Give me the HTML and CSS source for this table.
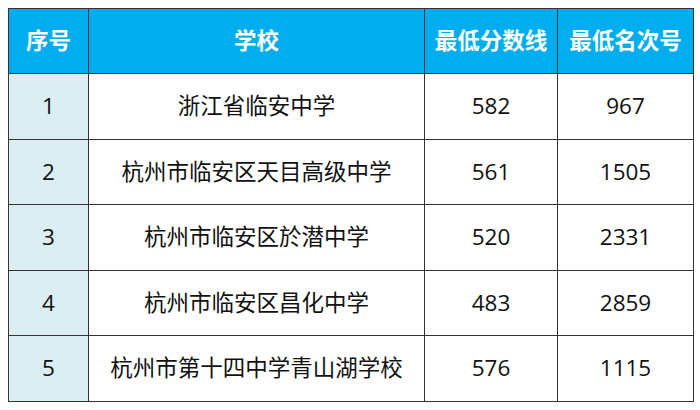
FILE: index.html
```html
<!DOCTYPE html>
<html lang="zh-CN">
<head>
<meta charset="utf-8">
<link rel="stylesheet" href="styles.css">
</head>
<body>
<table class="grid">
  <colgroup>
    <col class="c-no">
    <col class="c-school">
    <col class="c-score">
    <col class="c-rank">
  </colgroup>
  <thead>
    <tr><th>序号</th><th>学校</th><th>最低分数线</th><th>最低名次号</th></tr>
  </thead>
  <tbody>
    <tr><td class="no">1</td><td>浙江省临安中学</td><td>582</td><td>967</td></tr>
    <tr><td class="no">2</td><td>杭州市临安区天目高级中学</td><td>561</td><td>1505</td></tr>
    <tr><td class="no">3</td><td>杭州市临安区於潜中学</td><td>520</td><td>2331</td></tr>
    <tr><td class="no">4</td><td>杭州市临安区昌化中学</td><td>483</td><td>2859</td></tr>
    <tr><td class="no">5</td><td>杭州市第十四中学青山湖学校</td><td>576</td><td>1115</td></tr>
  </tbody>
</table>
</body>
</html>
```
FILE: styles.css
```css
html, body {
  margin: 0;
  padding: 0;
  background: #ffffff;
}
body {
  padding: 8px;
  font-family: "Open Sans", "Noto Sans CJK SC", sans-serif;
}
.grid {
  border-collapse: collapse;
  table-layout: fixed;
  width: 685px;
}
.c-no { width: 80px; }
.c-school { width: 336px; }
.c-score { width: 133px; }
.c-rank { width: 136px; }
.grid th, .grid td {
  border: 1px solid #333333;
  text-align: center;
  vertical-align: middle;
  padding: 0;
  font-size: 22.5px;
  line-height: 1;
  white-space: nowrap;
}
.grid th {
  height: 64px;
  background: #00aeef;
  color: #ffffff;
  font-weight: 700;
}
.grid td {
  height: 64.5px;
  color: #111111;
  font-weight: 400;
}
.grid td.no {
  background: #daeef3;
}
```
